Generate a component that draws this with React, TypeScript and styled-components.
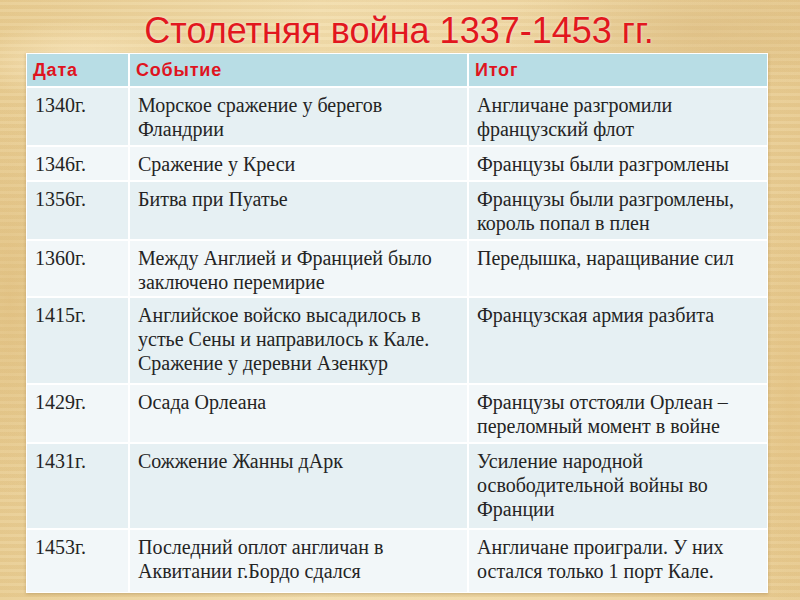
import React from "react";
import styled, { createGlobalStyle } from "styled-components";

const Global = createGlobalStyle`
  html, body { margin: 0; padding: 0; }
  body { width: 800px; height: 600px; overflow: hidden; }
`;

const Slide = styled.div`
  width: 800px;
  height: 600px;
  overflow: hidden;
  box-sizing: border-box;
  padding: 0 32px 0 26px;
  display: flex;
  flex-direction: column;
  background-color: #ecd39e;
  background-image:
    radial-gradient(ellipse 120px 40px at 80px 60px, rgba(255,240,205,0.6), transparent),
    radial-gradient(ellipse 200px 60px at 700px 30px, rgba(214,180,120,0.45), transparent),
    radial-gradient(ellipse 60px 200px at 10px 300px, rgba(220,185,120,0.5), transparent),
    radial-gradient(ellipse 40px 220px at 790px 400px, rgba(225,190,125,0.5), transparent),
    repeating-linear-gradient(0deg, rgba(255,245,220,0.12) 0 3px, rgba(200,160,100,0.08) 3px 7px),
    linear-gradient(90deg, #e7cb90, #f1dcab 40%, #eed6a2 70%, #e6c98e);
`;

const Title = styled.h1`
  margin: 0;
  height: 53px;
  box-sizing: border-box;
  padding-top: 12px;
  font-family: "Liberation Sans", Arial, sans-serif;
  font-weight: normal;
  font-size: 36px;
  line-height: 38px;
  color: #e2171e;
  text-align: center;
  padding-left: 4px;
  text-shadow: 0 0 3px rgba(255,255,255,0.5);
`;

const Table = styled.div`
  display: grid;
  grid-template-columns: 101px 337px 298px;
  background: #ffffff;
  padding: 1px;
  gap: 2px;
  box-shadow: 0 1px 3px rgba(120,90,40,0.3);
`;

const HeadCell = styled.div`
  background: #b8dde5;
  height: 32px;
  box-sizing: border-box;
  padding: 4px 7px 0 6px;
  font-family: "Liberation Sans", Arial, sans-serif;
  font-weight: bold;
  font-size: 18px;
  letter-spacing: 0.8px;
  line-height: 24px;
  color: #df141f;
`;

const Cell = styled.div<{ $alt: boolean; $h: number }>`
  background: ${(p) => (p.$alt ? "#f2f7f9" : "#e6f0f3")};
  height: ${(p) => p.$h}px;
  box-sizing: border-box;
  padding: 5px 8px 0 8px;
  font-family: "Liberation Serif", "Times New Roman", serif;
  font-size: 20px;
  line-height: 24px;
  color: #242424;
`;

const rows: [string, string, string, number][] = [
  ["1340г.", "Морское сражение у берегов Фландрии", "Англичане разгромили французский флот", 57],
  ["1346г.", "Сражение у Креси", "Французы были разгромлены", 33],
  ["1356г.", "Битва при Пуатье", "Французы были разгромлены, король попал в плен", 57],
  ["1360г.", "Между Англией и Францией было заключено перемирие", "Передышка, наращивание сил", 55],
  ["1415г.", "Английское войско высадилось в устье Сены и направилось к Кале. Сражение у деревни Азенкур", "Французская армия разбита", 85],
  ["1429г.", "Осада Орлеана", "Французы отстояли Орлеан – переломный момент в войне", 57],
  ["1431г.", "Сожжение Жанны дАрк", "Усиление народной освободительной войны во Франции", 84],
  ["1453г.", "Последний оплот англичан в Аквитании г.Бордо сдался", "Англичане проиграли. У них остался только 1 порт Кале.", 62],
];

export default function App() {
  return (
    <>
      <Global />
      <Slide>
        <Title>Столетняя война 1337-1453 гг.</Title>
        <Table>
          <HeadCell>Дата</HeadCell>
          <HeadCell>Событие</HeadCell>
          <HeadCell>Итог</HeadCell>
          {rows.map(([d, e, r, h], i) => (
            <React.Fragment key={d}>
              <Cell $alt={i % 2 === 1} $h={h}>{d}</Cell>
              <Cell $alt={i % 2 === 1} $h={h}>{e}</Cell>
              <Cell $alt={i % 2 === 1} $h={h}>{r}</Cell>
            </React.Fragment>
          ))}
        </Table>
      </Slide>
    </>
  );
}
